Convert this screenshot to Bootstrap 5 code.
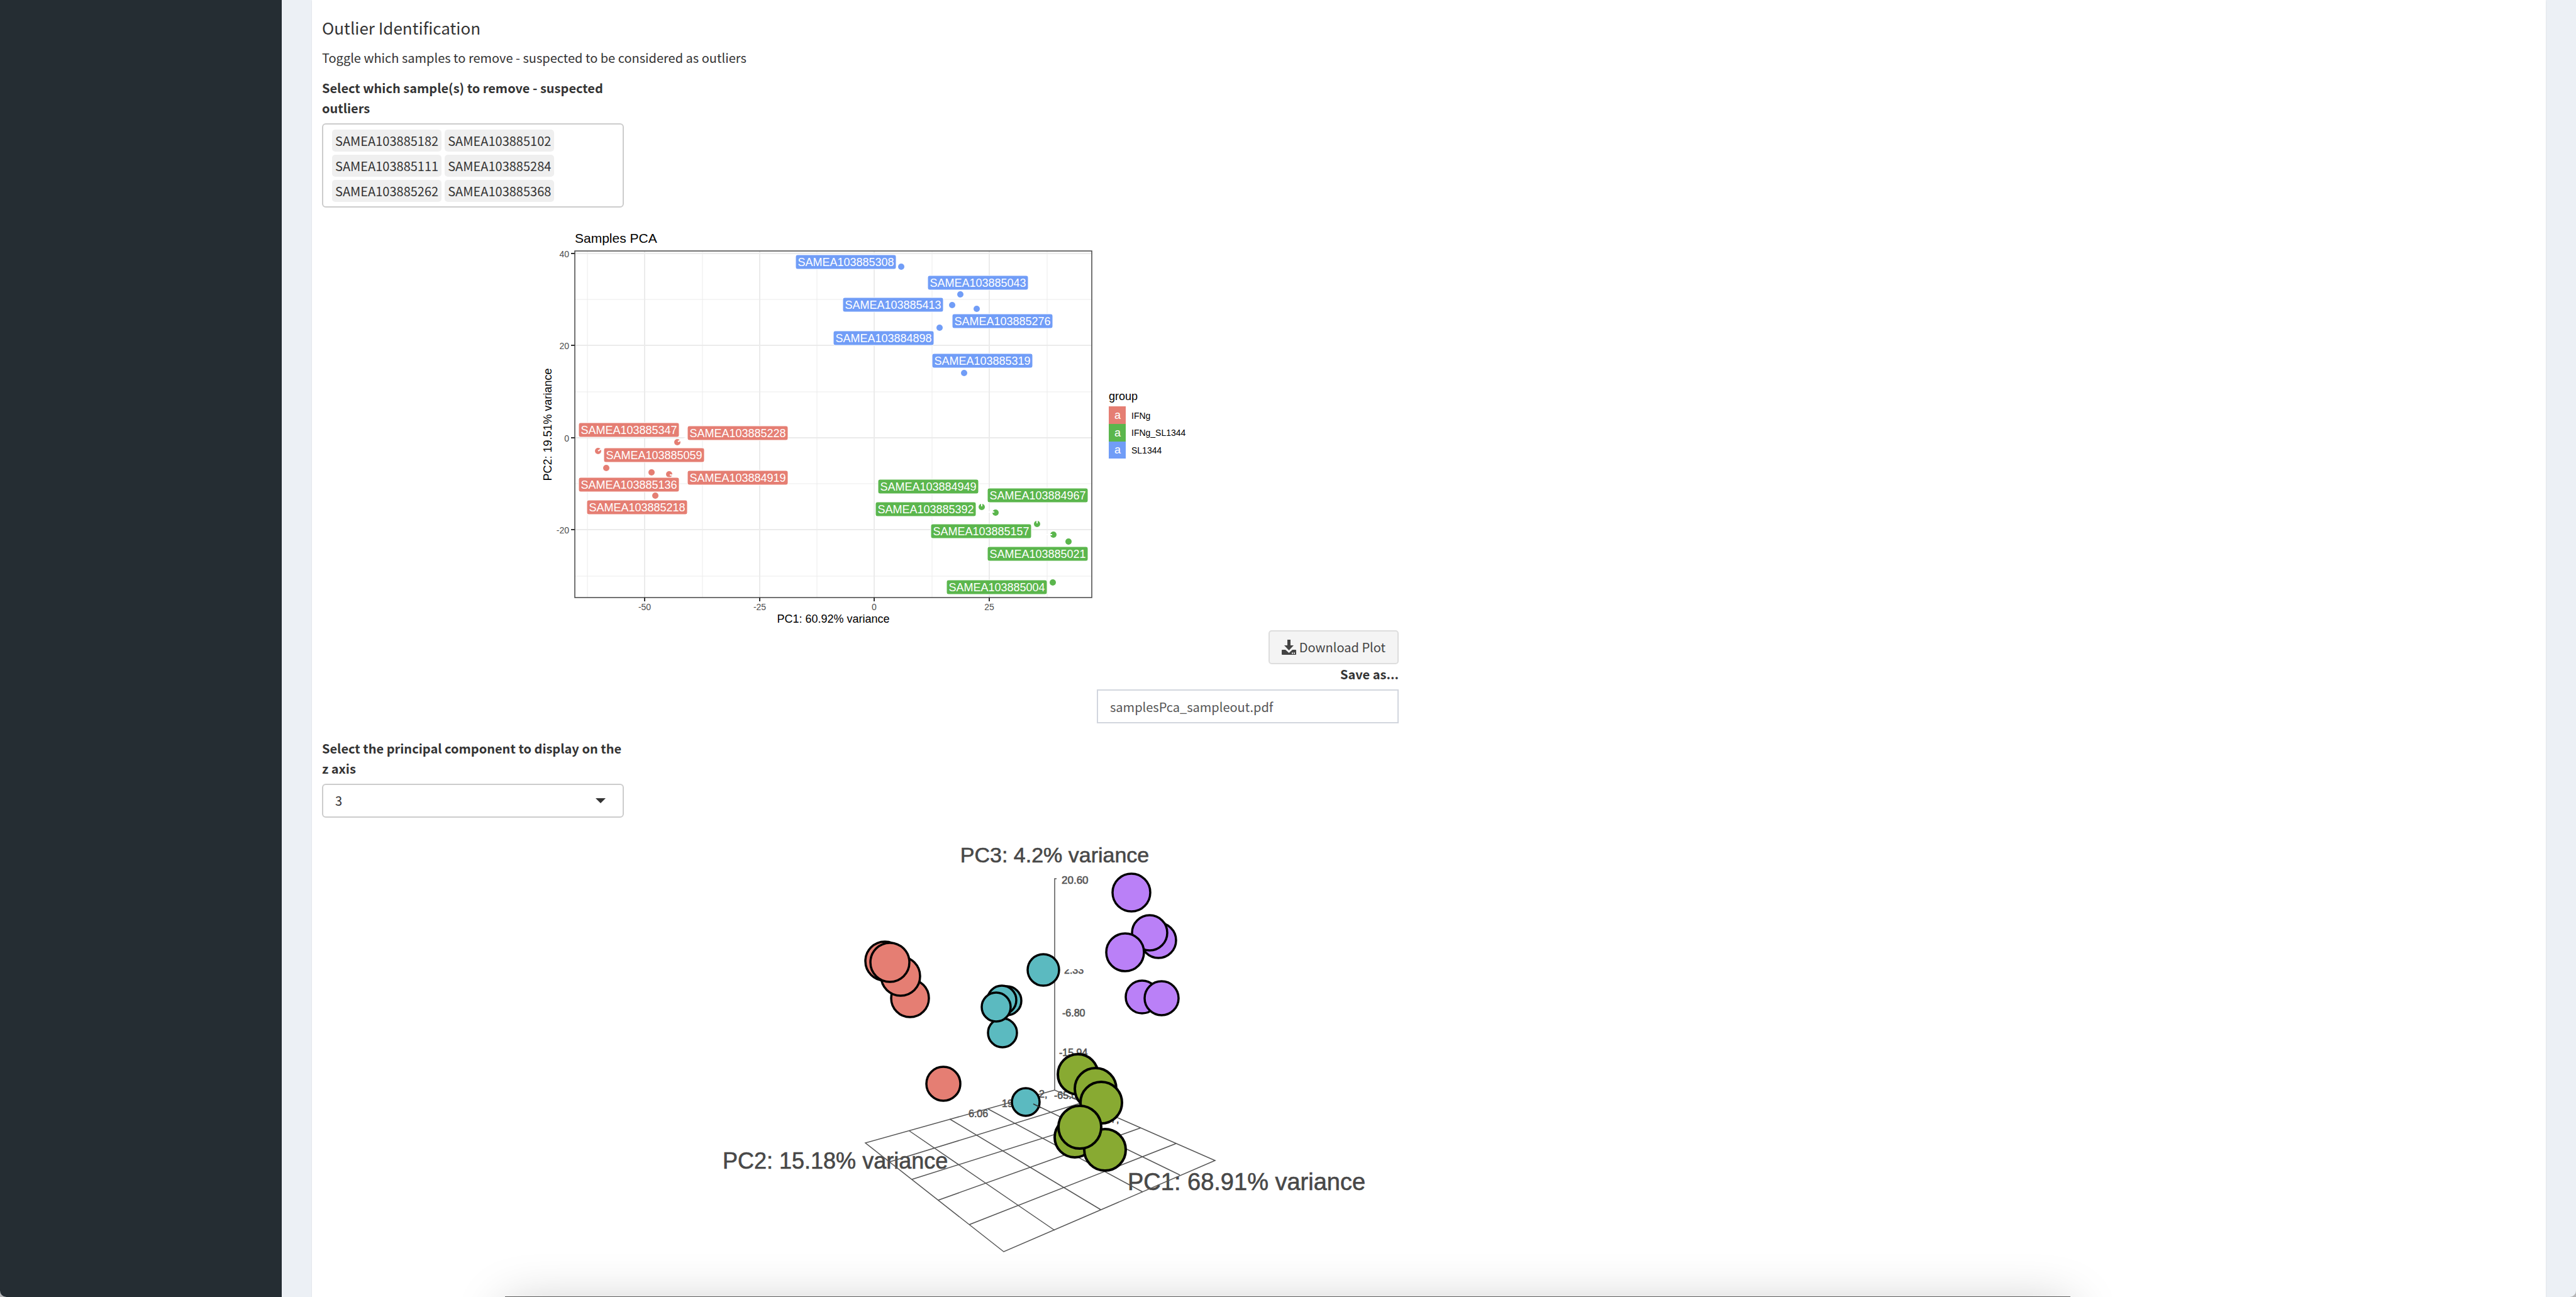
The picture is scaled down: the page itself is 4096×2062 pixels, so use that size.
<!DOCTYPE html>
<html lang="en">
<head>
<meta charset="utf-8">
<meta name="viewport" content="width=device-width, initial-scale=1">
<title>Outlier Identification</title>
<link rel="stylesheet" href="https://cdn.jsdelivr.net/npm/bootstrap@5.3.0/dist/css/bootstrap.min.css">
<style>
  html { background: #b4b4b6; }
  body {
    font-family: "Noto Sans CJK SC", "Noto Sans", sans-serif;
    font-size: 20px; line-height: 32px; color: #333; background: transparent;
  }
  .app-shell { background: #ecf0f5; border-radius: 0 0 10px 10px; }
  .app-side { width: 448px; background: #252d33; }
  .app-panel { margin: 0 48px; padding: 20px 16px 0; box-shadow: 0 1px 2px rgba(0,0,0,.1); }
  .plot-col { padding-right: 48px; }
  .panel-title { font-size: 26px; line-height: 48px; margin-bottom: 8px; font-weight: 400; }
  .field { width: 480px; }
  .field label, .save-label { font-weight: 700; display: block; }
  .tag-box { border: 2px solid #ccc; border-radius: 6px; padding: 8px 14px 4px; gap: 5px; min-height: 134px; }
  .tag-item { background: #efefef; border-radius: 5px; padding: 0 5px; height: 35px; line-height: 35px; }
  .ctl { height: 54px; border: 2px solid #ccc; color: #333; font-size: 20px; line-height: 32px; padding: 0 19px; width: 480px; background: #fff; }
  .ctl-select { border-radius: 6px; appearance: none; }
  .select-wrap svg { position: absolute; right: 29px; top: 23px; pointer-events: none; }
  .ctl-text { border-color: #d2d6de; border-radius: 0; color: #555; }
  .btn-plot { height: 54px; border: 2px solid #ddd; background: #f4f4f4; color: #444; border-radius: 5px; font-size: 20px; line-height: 32px; padding: 0 19px; gap: 5px; }
  .plot { display: block; width: 100%; font-family: "Liberation Sans", Arial, sans-serif; }
  .under-window { left: 803px; right: 804px; bottom: -199px; height: 200px; background: #5e5e5e; box-shadow: 0 12px 80px rgba(0,0,0,.22); }
</style>
<script src="https://cdn.jsdelivr.net/npm/bootstrap@5.3.0/dist/js/bootstrap.bundle.min.js"></script>
</head>
<body>
<div class="app-shell d-flex min-vh-100 position-relative overflow-hidden">
  <aside class="app-side flex-shrink-0"></aside>
  <main class="flex-grow-1 d-flex">
    <section class="app-panel bg-white flex-grow-1">
      <div class="row g-0">
        <div class="col-6 plot-col">
          <h4 class="panel-title">Outlier Identification</h4>
          <p class="mb-3">Toggle which samples to remove - suspected to be considered as outliers</p>
          <div class="field">
            <label id="tags-label" class="mb-2">Select which sample(s) to remove - suspected outliers</label>
            <div class="tag-box d-flex flex-wrap align-content-start" role="listbox" aria-labelledby="tags-label">
              <span class="tag-item" role="option">SAMEA103885182</span><span class="tag-item" role="option">SAMEA103885102</span>
              <span class="tag-item" role="option">SAMEA103885111</span><span class="tag-item" role="option">SAMEA103885284</span>
              <span class="tag-item" role="option">SAMEA103885262</span><span class="tag-item" role="option">SAMEA103885368</span>
            </div>
          </div>

          <svg class="plot" id="pca2d" viewBox="512 330 1712 672" role="img" aria-label="Samples PCA">
            <g stroke="#ebebeb" stroke-width="1">
              <path d="M934 399V950M1117 399V950M1299 399V950M1482 399V950M1665 399V950M914 476H1736M914 623H1736M914 769H1736M914 916H1736"/>
              <path stroke-width="2" d="M1025 399V950M1208 399V950M1390 399V950M1573 399V950M914 403H1736M914 549H1736M914 696H1736M914 842H1736"/>
            </g>
            <rect x="914" y="399" width="822" height="551" fill="none" stroke="#444" stroke-width="1.5"/>
            <path stroke="#333" stroke-width="2" d="M908 403h6M908 549h6M908 696h6M908 842h6M1025 950v6M1208 950v6M1390 950v6M1573 950v6"/>
            <g font-size="14" fill="#4d4d4d" text-anchor="end">
              <text x="905" y="409">40</text><text x="905" y="555">20</text><text x="905" y="702">0</text><text x="905" y="848">-20</text>
            </g>
            <g font-size="14" fill="#4d4d4d" text-anchor="middle">
              <text x="1025" y="970">-50</text><text x="1208" y="970">-25</text><text x="1390" y="970">0</text><text x="1573" y="970">25</text>
            </g>
            <text x="914" y="386" font-size="21">Samples PCA</text>
            <g font-size="18">
              <text x="1325" y="990" text-anchor="middle">PC1: 60.92% variance</text>
              <text transform="translate(877 675) rotate(-90)" text-anchor="middle">PC2: 19.51% variance</text>
              <text x="1763" y="636">group</text>
            </g>
            <rect x="1763" y="646" width="27" height="28" fill="#e57e73"/><rect x="1763" y="674" width="27" height="28" fill="#5bb64d"/><rect x="1763" y="702" width="27" height="27" fill="#719df7"/>
            <g font-size="18" fill="#fff" text-anchor="middle"><text x="1777" y="666">a</text><text x="1777" y="694">a</text><text x="1777" y="721">a</text></g>
            <g font-size="14"><text x="1799" y="666">IFNg</text><text x="1799" y="693">IFNg_SL1344</text><text x="1799" y="721">SL1344</text></g>
            <g id="marks"></g>
          </svg>

          <div class="d-flex flex-column align-items-end">
            <button type="button" class="btn btn-plot d-flex align-items-center">
              <svg width="23" height="24" viewBox="0 0 23 24" aria-hidden="true"><path fill="#444" d="M9 0h5v9h5l-7.500 8L4 9h5zM1 16h5l5.500 5L17 16h5q1 0 1 1v6q0 1-1 1H1q-1 0-1-1v-6q0-1 1-1z"/><path fill="#f4f4f4" d="M16 20.500h2v2h-2zM19 20.500h2v2h-2z"/></svg>
              Download Plot
            </button>
            <label for="saveas" class="save-label mb-2">Save as...</label>
            <input id="saveas" class="ctl ctl-text" type="text" value="samplesPca_sampleout.pdf">
          </div>

          <div class="field mt-4">
            <label for="pcz" class="mb-2">Select the principal component to display on the z axis</label>
            <div class="select-wrap position-relative">
              <select id="pcz" class="ctl ctl-select d-block"><option>3</option></select>
              <svg width="16" height="8" viewBox="0 0 16 8" aria-hidden="true"><path d="M0 0h16L8 8z" fill="#333"/></svg>
            </div>
          </div>

          <svg class="plot" viewBox="512 1300 1712 750" role="img" aria-label="Principal components in 3D">
            <g fill="#484848" stroke="#484848" stroke-width=".6">
              <text x="1677" y="1371" font-size="34" text-anchor="middle">PC3: 4.2% variance</text>
              <text x="1149" y="1858" font-size="36">PC2: 15.18% variance</text>
              <text x="1793" y="1892" font-size="38">PC1: 68.91% variance</text>
            </g>
            <clipPath id="halfTick"><rect x="1680" y="1541" width="60" height="12"/></clipPath>
            <g fill="#555" font-size="16" stroke="#555" stroke-width=".6">
              <text x="1688" y="1405" font-size="17">20.60</text>
              <text x="1692" y="1548" clip-path="url(#halfTick)">2.33</text>
              <text x="1689" y="1616">-6.80</text>
              <text x="1684" y="1679">-15.94</text>
              <text x="1593" y="1760">19.06</text>
              <text x="1540" y="1776">6.06</text>
              <text x="1652" y="1745">2,</text>
              <text x="1676" y="1747">-65.0</text>
              <text x="1766" y="1785">7,</text>
            </g>
            <g fill="none" stroke="#555" stroke-width="1.500">
              <path d="M1680 1397h-3V1733M1677 1733L1376 1817L1596 1990L1932 1845Z"/>
              <path d="M1446 1798L1677 1956M1510 1779L1750 1923M1571 1763L1817 1895M1629 1748L1876 1868"/>
              <path d="M1415 1847L1724 1752M1450 1875L1771 1774M1492 1908L1814 1793M1541 1947L1870 1818"/>
            </g>
            <g stroke="#000" stroke-width="3.500">
              <g fill="#e57e73"><circle cx="1447" cy="1587" r="30"/><circle cx="1432" cy="1552" r="31"/><circle cx="1407" cy="1528" r="31"/><circle cx="1415" cy="1530" r="31"/><circle cx="1500" cy="1723" r="27"/></g>
              <g fill="#5bbac0"><circle cx="1659" cy="1542" r="25"/><circle cx="1594" cy="1642" r="23"/><circle cx="1601" cy="1591" r="23"/><circle cx="1593" cy="1590" r="23"/><circle cx="1584" cy="1601" r="23"/><circle cx="1631" cy="1752" r="22"/></g>
              <g fill="#ba80f7"><circle cx="1799" cy="1419" r="30"/><circle cx="1842" cy="1495" r="28"/><circle cx="1828" cy="1483" r="28"/><circle cx="1789" cy="1514" r="30"/><circle cx="1816" cy="1585" r="26"/><circle cx="1847" cy="1587" r="27"/></g>
              <g fill="#88aa32" stroke-width="4"><circle cx="1714" cy="1708" r="32"/><circle cx="1742" cy="1731" r="33"/><circle cx="1751" cy="1753" r="33"/><circle cx="1709" cy="1808" r="32"/><circle cx="1757" cy="1828" r="33"/><circle cx="1717" cy="1792" r="34"/></g>
            </g>
            <path d="M1643 1755L1655 1761" stroke="#333" stroke-width="1.500"/>
          </svg>
        </div>
      </div>
    </section>
  </main>
  <div class="under-window position-absolute"></div>
</div>
<script>
  const groups = [
    { color: '#719df7',
      tags: [['SAMEA103885308',1265,405],['SAMEA103885043',1475,438],['SAMEA103885413',1340,473],['SAMEA103885276',1514,499],['SAMEA103884898',1325,526],['SAMEA103885319',1482,562]],
      dots: [[1433,424],[1527,468],[1514,485],[1553,491],[1494,521],[1533,593]], leads: '' },
    { color: '#e57e73',
      tags: [['SAMEA103885347',920,672],['SAMEA103885228',1093,677],['SAMEA103885059',960,712],['SAMEA103884919',1093,748],['SAMEA103885136',920,759],['SAMEA103885218',933,795]],
      dots: [[951,717],[1077,703],[964,744],[1036,751],[1064,754],[1042,788]], leads: 'M951 717L957 713M1078 702L1093 695M1065 755L1074 756' },
    { color: '#5bb64d',
      tags: [['SAMEA103884949',1396,762],['SAMEA103884967',1570,776],['SAMEA103885392',1392,798],['SAMEA103885157',1480,833],['SAMEA103885021',1570,869],['SAMEA103885004',1505,922]],
      dots: [[1561,806],[1583,815],[1649,833],[1675,850],[1699,861],[1674,926]], leads: 'M1561 800V805M1572 814H1581M1649 827V832M1662 850H1673' }
  ];
  document.getElementById('marks').innerHTML = groups.map(g =>
    g.dots.map(([x, y]) => `<circle cx="${x}" cy="${y}" r="5" fill="${g.color}"/>`).join('') +
    `<path d="${g.leads}" stroke="#fff" stroke-width="2"/>` +
    g.tags.map(([t, x, y]) => `<rect x="${x}" y="${y}" width="160" height="23" rx="3" fill="${g.color}" stroke="#fff"/>` +
      `<text x="${x + 80}" y="${y + 18}" font-size="18" fill="#fff" text-anchor="middle">${t}</text>`).join('')
  ).join('');
</script>
</body>
</html>
